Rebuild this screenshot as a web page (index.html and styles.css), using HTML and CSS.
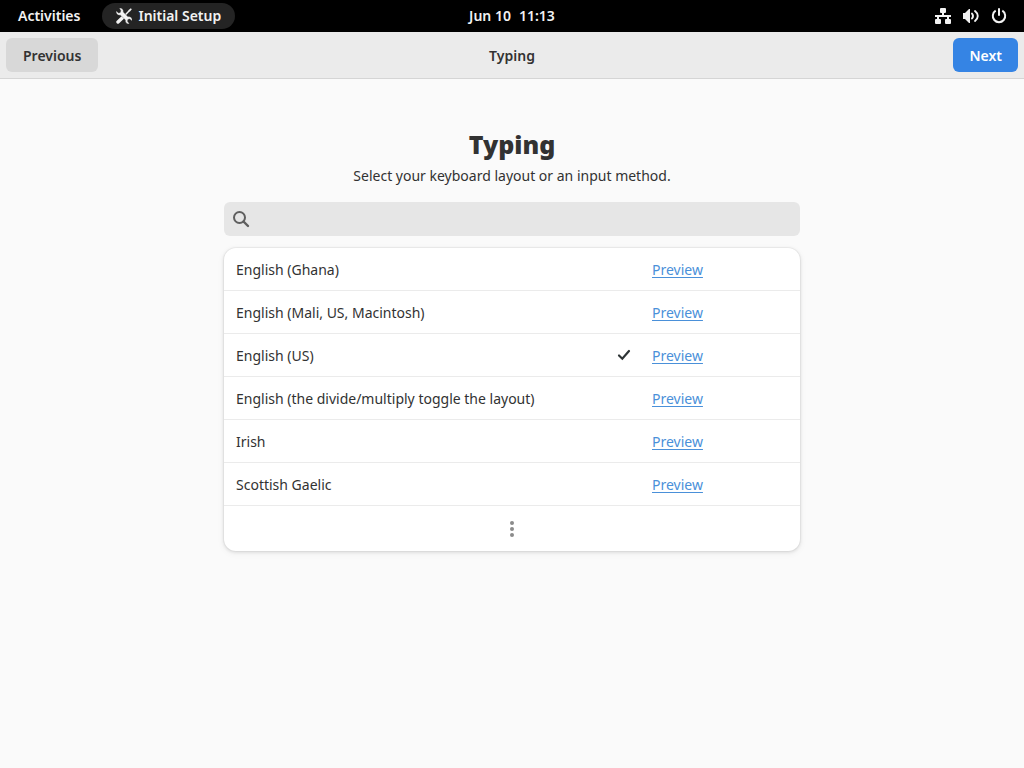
FILE: index.html
```html
<!DOCTYPE html>
<html lang="en">
<head>
<meta charset="utf-8">
<meta name="viewport" content="width=device-width, initial-scale=1">
<title>Initial Setup</title>
<link rel="stylesheet" href="styles.css">
</head>
<body>
<nav class="topbar">
  <div class="topbar-start">
    <button class="activities" type="button">Activities</button>
    <button class="app-menu" type="button">
      <svg width="16" height="16" viewBox="0 0 16 16" aria-hidden="true">
        <path d="M2 14 7.500 8.800" stroke="#f2f2f2" stroke-width="3.400" stroke-linecap="round"/>
        <path d="M8 8.300 13.500 2.600" stroke="#f2f2f2" stroke-width="1.500"/>
        <path d="M12.300 2.200 14.800.2l1 1-2 2.600z" fill="#f2f2f2"/>
        <path d="M3.300.2C5.800-.4 7.900 1.700 7.300 4.100L12 8.700c2.500-.6 4.700 1.500 4 4.200l-2.300-1.900-1.800.5-.4 1.800 1.900 2.500c-2.600.5-4.500-1.500-4-3.900L4.400 7.200C1.800 7.700-.5 5.600.2 2.900l2.400 2 1.700-.5.500-1.800z" fill="#f2f2f2" stroke="#242424" stroke-width=".3"/>
      </svg>
      <span>Initial Setup</span>
    </button>
  </div>
  <button class="clock" type="button"><span>Jun 10</span><span>11:13</span></button>
  <button class="status" type="button" aria-label="System status">
    <svg width="16" height="16" viewBox="0 0 16 16" aria-hidden="true" fill="#f2f2f2">
      <rect x="5" y="0" width="6" height="5" rx="1"/>
      <rect x="0" y="11" width="6" height="5" rx="1"/>
      <rect x="10" y="11" width="6" height="5" rx="1"/>
      <path d="M7 4h2v3h7v2h-2v3h-2V9H4v3H2V9H0V7h7z"/>
    </svg>
    <svg width="16" height="16" viewBox="0 0 16 16" aria-hidden="true" fill="none" stroke="#f2f2f2">
      <path d="M0 5h2l4-4h1v14H6l-4-4H0z" fill="#f2f2f2" stroke="none"/>
      <path d="M9 5.500a4 4 0 0 1 0 5" stroke-width="1.900" stroke-linecap="round"/>
      <path d="M12 3c3.700 3 3.700 7 0 10" stroke-width="1.900" stroke-linecap="round"/>
    </svg>
    <svg width="16" height="16" viewBox="0 0 16 16" aria-hidden="true" fill="none" stroke="#f2f2f2" stroke-width="2">
      <path d="M4.700 2.700a6.200 6.200 0 1 0 6.600 0"/>
      <path d="M8 1v6" stroke-linecap="round"/>
    </svg>
  </button>
</nav>

<header class="headerbar">
  <button class="button previous" type="button">Previous</button>
  <span class="window-title">Typing</span>
  <button class="button next" type="button">Next</button>
</header>

<main class="page">
  <h1 class="title">Typing</h1>
  <p class="subtitle">Select your keyboard layout or an input method.</p>
  <div class="search">
    <svg width="18" height="18" viewBox="0 0 18 18" aria-hidden="true" fill="none" stroke="#5f5f5f" stroke-width="2">
      <circle cx="7.500" cy="7.500" r="5.500"/>
      <path d="m11.500 11.500 4.500 4.500" stroke-width="2.400" stroke-linecap="round"/>
    </svg>
    <input class="search-input" type="search" aria-label="Search input sources">
  </div>
  <ul class="list">
    <li class="row"><label class="choice"><span class="name">English (Ghana)</span><input class="mark" type="radio" name="layout"></label><a class="preview" href="#gh">Preview</a></li>
    <li class="row"><label class="choice"><span class="name">English (Mali, US, Macintosh)</span><input class="mark" type="radio" name="layout"></label><a class="preview" href="#ml">Preview</a></li>
    <li class="row"><label class="choice"><span class="name">English (US)</span><input class="mark" type="radio" name="layout" checked><svg class="tick" width="16" height="16" viewBox="0 0 16 16" aria-hidden="true"><path d="m3 8.500 3.300 3.200L13 4" fill="none" stroke="#2e3436" stroke-width="2.200" stroke-linecap="round"/></svg></label><a class="preview" href="#us">Preview</a></li>
    <li class="row"><label class="choice"><span class="name">English (the divide/multiply toggle the layout)</span><input class="mark" type="radio" name="layout"></label><a class="preview" href="#divide">Preview</a></li>
    <li class="row"><label class="choice"><span class="name">Irish</span><input class="mark" type="radio" name="layout"></label><a class="preview" href="#ie">Preview</a></li>
    <li class="row"><label class="choice"><span class="name">Scottish Gaelic</span><input class="mark" type="radio" name="layout"></label><a class="preview" href="#gd">Preview</a></li>
    <li class="row-more">
      <button class="more" type="button" aria-label="More layouts">
        <svg width="16" height="16" viewBox="0 0 16 16" aria-hidden="true" fill="#8b8b8b"><circle cx="8" cy="2" r="2"/><circle cx="8" cy="8" r="2"/><circle cx="8" cy="14" r="2"/></svg>
      </button>
    </li>
  </ul>
</main>
</body>
</html>
```

FILE: styles.css
```css
* {
  box-sizing: border-box;
}

body {
  margin: 0;
  min-height: 100vh;
  background: #fafafa;
  color: #323232;
  font-family: "Noto Sans", "Open Sans", sans-serif;
  font-size: 14px;
  line-height: 20px;
}

button,
input {
  border: 0;
  background: none;
  color: inherit;
  font: inherit;
}

svg {
  display: block;
  flex: none;
}

.topbar,
.headerbar {
  display: grid;
  grid-template-columns: 1fr auto 1fr;
  align-items: center;
  font-weight: 600;
}

.topbar {
  height: 32px;
  padding: 0 5px;
  background: #000;
  color: #f2f2f2;
}

.topbar-start,
.app-menu,
.clock,
.status {
  display: flex;
  align-items: center;
}

.topbar-start {
  gap: 9px;
}

.activities {
  padding: 0 13px;
}

.app-menu {
  height: 26px;
  gap: 6px;
  padding: 0 14px;
  border-radius: 13px;
  background: #242424;
}

.clock {
  gap: 8px;
}

.status {
  justify-self: end;
  gap: 12px;
  padding: 0 12px;
}

.headerbar {
  height: 47px;
  padding: 0 6px;
  border-bottom: 1px solid #d5d5d5;
  background: #ebebeb;
}

.window-title {
  padding-top: 2px;
}

.button {
  height: 34px;
  padding: 2px 17px 0;
  border-radius: 6px;
}

.previous {
  justify-self: start;
  background: #d8d8d8;
}

.next {
  justify-self: end;
  padding: 2px 16px 0;
  background: #3584e4;
  color: #fff;
}

.page {
  width: 100%;
  max-width: 600px;
  margin: 0 auto;
  padding: 47px 12px;
}

.title {
  margin: 0;
  font-size: 25px;
  font-weight: 900;
  line-height: 36px;
  text-align: center;
}

.subtitle {
  margin: 4px 0 16px;
  text-align: center;
}

.search {
  display: flex;
  align-items: center;
  gap: 6px;
  height: 34px;
  padding: 0 8px;
  border-radius: 6px;
  background: #e6e6e6;
}

.search-input {
  flex: 1;
  min-width: 0;
  padding: 0;
  outline: none;
}

.list {
  margin: 12px 0 0;
  padding: 0;
  border-radius: 12px;
  background: #fff;
  box-shadow: 0 0 0 1px rgba(0, 0, 0, 0.03), 0 1px 3px 1px rgba(0, 0, 0, 0.08), 0 2px 6px 2px rgba(0, 0, 0, 0.03);
  list-style: none;
}

.row {
  display: grid;
  grid-template-columns: 1fr 136px;
  align-items: center;
  gap: 20px;
  min-height: 43px;
  padding: 0 12px;
  border-bottom: 1px solid #ebebeb;
}

.choice {
  display: grid;
  grid-template-columns: 1fr 16px;
  align-items: center;
}

.name,
.preview {
  padding-top: 2px;
}

.mark {
  grid-area: 1 / 2;
  width: 16px;
  height: 16px;
  margin: 0;
  appearance: none;
}

.tick {
  grid-area: 1 / 2;
}

.preview {
  justify-self: start;
  color: #4a90d9;
  text-underline-offset: 2px;
}

.row-more {
  display: flex;
}

.more {
  display: flex;
  flex: 1;
  align-items: center;
  justify-content: center;
  height: 45px;
}
```
